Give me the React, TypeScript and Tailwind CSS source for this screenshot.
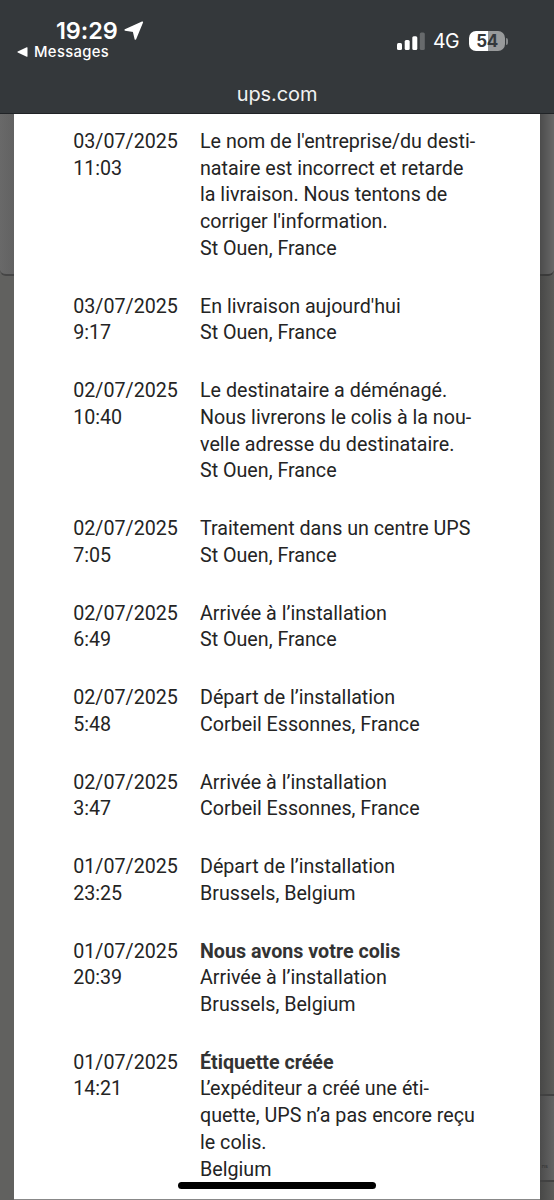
type Event = { date: string; time: string; title?: string; lines: string[] };

const events: Event[] = [
  {
    date: "03/07/2025",
    time: "11:03",
    lines: [
      "Le nom de l'entreprise/du desti-",
      "nataire est incorrect et retarde",
      "la livraison. Nous tentons de",
      "corriger l'information.",
      "St Ouen, France",
    ],
  },
  { date: "03/07/2025", time: "9:17", lines: ["En livraison aujourd'hui", "St Ouen, France"] },
  {
    date: "02/07/2025",
    time: "10:40",
    lines: [
      "Le destinataire a déménagé.",
      "Nous livrerons le colis à la nou-",
      "velle adresse du destinataire.",
      "St Ouen, France",
    ],
  },
  { date: "02/07/2025", time: "7:05", lines: ["Traitement dans un centre UPS", "St Ouen, France"] },
  { date: "02/07/2025", time: "6:49", lines: ["Arrivée à l’installation", "St Ouen, France"] },
  { date: "02/07/2025", time: "5:48", lines: ["Départ de l’installation", "Corbeil Essonnes, France"] },
  { date: "02/07/2025", time: "3:47", lines: ["Arrivée à l’installation", "Corbeil Essonnes, France"] },
  { date: "01/07/2025", time: "23:25", lines: ["Départ de l’installation", "Brussels, Belgium"] },
  {
    date: "01/07/2025",
    time: "20:39",
    title: "Nous avons votre colis",
    lines: ["Arrivée à l’installation", "Brussels, Belgium"],
  },
  {
    date: "01/07/2025",
    time: "14:21",
    title: "Étiquette créée",
    lines: ["L’expéditeur a créé une éti-", "quette, UPS n’a pas encore reçu", "le colis.", "Belgium"],
  },
];

function StatusBar() {
  return (
    <header className="flex h-[114px] shrink-0 flex-col border-b border-[#202326] bg-[#34383b] font-['Inter',sans-serif] text-white">
      <div className="flex h-[76px] items-start justify-between pl-[17px] pr-[46px]">
        <div className="flex flex-col pt-[19px]">
          <div className="flex h-6 items-center pl-[39px]">
            <span className="w-[68px] text-[23.5px] leading-6 font-semibold tracking-[-0.1px]">19:29</span>
            <svg width="20" height="20" viewBox="0 0 20 20" fill="currentColor">
              <path
                d="M18.300 1.200 1.200 8.900 9.500 10.100 11.400 18z"
                stroke="currentColor"
                strokeWidth="1.600"
                strokeLinejoin="round"
              />
            </svg>
          </div>
          <div className="flex h-[18px] items-center gap-[6px]">
            <svg width="11" height="10" viewBox="0 0 11 10" fill="currentColor">
              <path d="M.7 4.500 9.700.3c.5-.2.8 0 .8.5v8.400c0 .5-.3.7-.8.5L.7 5.500q-.7-.5 0-1z" />
            </svg>
            <span className="text-[14.8px] leading-[18px] font-medium tracking-[0.35px]">Messages</span>
          </div>
        </div>
        <div className="flex items-center pt-[29px]">
          <svg width="28" height="18" viewBox="0 0 28 18" fill="currentColor">
            <rect x="0" y="11" width="5" height="7" rx="1.500" />
            <rect x="7.700" y="8" width="5" height="10" rx="1.500" />
            <rect x="15.300" y="4.300" width="5" height="13.700" rx="1.500" />
            <rect x="22.800" y="0.500" width="5" height="17.500" rx="1.500" opacity=".25" />
          </svg>
          <span className="ml-[8px] w-[28px] text-[19.5px] leading-6 tracking-[-0.5px]">4G</span>
          <span className="ml-[8px] flex h-5 w-9 items-center justify-center rounded-[7px] bg-[linear-gradient(90deg,#fff_53%,#989a9b_53%)] text-[17px] leading-5 font-bold tracking-[-0.4px] text-[#34383b]">
            54
          </span>
          <span className="ml-px h-[7px] w-[2px] rounded-r-full bg-[#85888a]" />
        </div>
      </div>
      <div className="flex h-9 items-center justify-center text-[20px] tracking-[-0.1px] text-[#f1f2f2]">ups.com</div>
    </header>
  );
}

function LeftBackdrop() {
  return (
    <div className="flex w-[14px] shrink-0 flex-col bg-[#61615f]">
      <div className="h-[162px] rounded-bl-[6px] border-b-2 border-[#464646] bg-[linear-gradient(90deg,#696969,#626262)]" />
    </div>
  );
}

function RightBackdrop() {
  return (
    <div className="flex w-[14px] shrink-0 flex-col bg-[linear-gradient(90deg,#484847,#5c5c5a)]">
      <div className="h-[162px] rounded-br-[6px] border-b-2 border-[#3a3a3a] bg-[linear-gradient(90deg,#4c4c4c,#686868)]" />
      <div className="h-[818px]" />
      <div className="flex h-[88px] items-end justify-end border-t-2 border-b-2 border-[#414141] bg-[linear-gradient(90deg,#4c4c4c,#646464)] pr-[6px] pb-[10px] text-[6px] leading-[8px] text-[#333]">
        ns
      </div>
    </div>
  );
}

function EventRow({ event }: { event: Event }) {
  return (
    <li className="flex">
      <div className="w-[126.800px] shrink-0">
        <div>{event.date}</div>
        <div>{event.time}</div>
      </div>
      <div className="whitespace-nowrap">
        {event.title && <div className="font-bold text-[#333]">{event.title}</div>}
        {event.lines.map((line) => (
          <div key={line}>
            {line.startsWith("L’") ? (
              <>
                <span className="tracking-[-4px]">L</span>
                {line.slice(1)}
              </>
            ) : (
              line
            )}
          </div>
        ))}
      </div>
    </li>
  );
}

export default function App() {
  return (
    <div className="relative flex h-[1200px] w-[554px] flex-col overflow-hidden bg-[#61615f]">
      <StatusBar />
      <div className="flex min-h-0 flex-1">
        <LeftBackdrop />
        <main className="flex-1 overflow-hidden border-b border-[#888] bg-white pt-[15px] pl-[59.200px]">
          <ul className="flex flex-col gap-[31.1px] font-['Roboto',sans-serif] text-[19.680px] leading-[26.7px] text-[#242424]">
            {events.map((event) => (
              <EventRow key={event.date + event.time} event={event} />
            ))}
          </ul>
        </main>
        <RightBackdrop />
      </div>
      <div className="absolute top-[1182px] left-[178px] h-[7px] w-[198px] rounded-full bg-black" />
    </div>
  );
}
